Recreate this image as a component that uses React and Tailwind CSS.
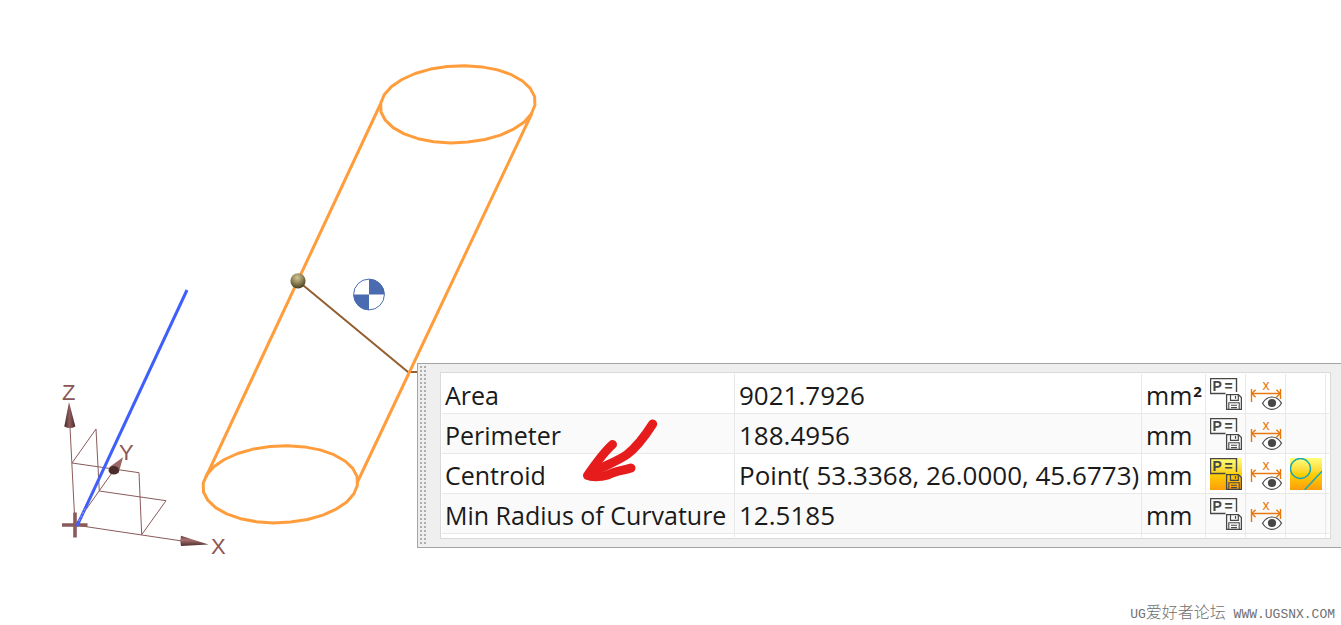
const MEASUREMENTS = [
  { id: 'area', label: 'Area', value: '9021.7926', unit: 'mm', power: '2' },
  { id: 'perimeter', label: 'Perimeter', value: '188.4956', unit: 'mm' },
  {
    id: 'centroid',
    label: 'Centroid',
    value: 'Point( 53.3368, 26.0000, 45.6773)',
    unit: 'mm',
    saved: true,
    hasGeometry: true
  },
  { id: 'min-radius', label: 'Min Radius of Curvature', value: '12.5185', unit: 'mm' }
];

const ACTIVE_BG = 'bg-linear-to-b from-[#ffff78] via-[#fbd000] to-[#ff9c0c]';

// Curves are tessellated, so the rims are drawn as polygons
const rimPoints = (cx, cy, segments = 28) => {
  const rx = 77.5;
  const ry = 38.5;
  const tilt = (-2.5 * Math.PI) / 180;

  return Array.from({ length: segments }, (_, i) => {
    const t = ((i + 0.5) / segments) * 2 * Math.PI;
    const x = rx * Math.cos(t);
    const y = ry * Math.sin(t);
    const px = cx + x * Math.cos(tilt) - y * Math.sin(tilt);
    const py = cy + x * Math.sin(tilt) + y * Math.cos(tilt);
    return `${px.toFixed(1)},${py.toFixed(1)}`;
  }).join(' ');
};

const SaveExpressionIcon = () => (
  <svg viewBox="0 0 32 32" className="block size-8" fill="none" stroke="#474747" aria-hidden="true">
    <path d="M15.5 15.5H0.5V0.5H26.5V14" strokeWidth="1.4" />
    <g
      fill="#474747"
      stroke="none"
      fontFamily="'Liberation Sans', sans-serif"
      fontWeight="700"
      fontSize="14"
    >
      <text x="2.4" y="13">P</text>
      <text x="14.4" y="13">=</text>
    </g>
    <path d="M16.6 16.6H28.4L31.4 19.6V31.4H16.6Z" strokeWidth="1.3" />
    <path d="M20.5 16.6V22.3H28.3V16.6M25.5 18V20.8" strokeWidth="1.2" />
    <path d="M18.8 31.4V24.7H29.2V31.4M21 27.2H27M21 29.6H27" strokeWidth="1.1" />
  </svg>
);

const ShowDimensionIcon = () => (
  <svg viewBox="0 0 32 32" className="block size-8" fill="none" aria-hidden="true">
    <g stroke="#e8780c" strokeWidth="1.4">
      <path d="M1.5 11V24M30.5 11V21M2 15.5H30" />
      <path d="M5.6 11.7L1.8 15.5L5.6 19.3M26.4 11.7L30.2 15.5L26.4 19.3" />
    </g>
    <text
      x="12.4"
      y="12"
      fill="#e8780c"
      fontFamily="'Liberation Sans', sans-serif"
      fontSize="14"
    >
      x
    </text>
    <path
      d="M12.5 25.2C15 21.2 18.4 19 22 19S29 21.2 31.5 25.2C29 29.2 25.6 31.4 22 31.4S15 29.2 12.5 25.2Z"
      fill="#fff"
      stroke="#474747"
      strokeWidth="1.2"
    />
    <circle cx="22" cy="25" r="4.1" fill="#474747" />
  </svg>
);

const GeometryIcon = () => (
  <svg
    viewBox="0 0 32 32"
    className="block size-8"
    fill="none"
    stroke="#14a8b8"
    strokeWidth="1.4"
    aria-hidden="true"
  >
    <circle cx="10.5" cy="10.5" r="10" />
    <path d="M14.5 32L32 13.2" />
  </svg>
);

const IconCell = ({ children }) => (
  <td className="border-r border-b border-[#e8e8e8] p-0">
    <div className="flex justify-center">{children}</div>
  </td>
);

const MeasurementRow = ({ item }) => (
  <tr className="h-10 even:bg-[#fafafa]">
    <th
      scope="row"
      className="border-r border-b border-[#e8e8e8] pt-[2px] pr-0 pb-0 pl-[3px] text-left text-[25px] font-normal"
    >
      {item.label}
    </th>
    <td className="border-r border-b border-[#e8e8e8] pt-[2px] pr-0 pb-0 pl-1">{item.value}</td>
    <td className="border-r border-b border-[#e8e8e8] pt-[2px] pr-0 pb-0 pl-1 text-[25px]">
      {item.unit}
      {item.power && <sup className="ml-px text-[15px] font-bold">{item.power}</sup>}
    </td>
    <IconCell>
      <button
        type="button"
        aria-label={`Save ${item.label} as expression`}
        aria-pressed={Boolean(item.saved)}
        className={item.saved ? ACTIVE_BG : ''}
      >
        <SaveExpressionIcon />
      </button>
    </IconCell>
    <IconCell>
      <button type="button" aria-label={`Show ${item.label} dimension`}>
        <ShowDimensionIcon />
      </button>
    </IconCell>
    <IconCell>
      {item.hasGeometry && (
        <button
          type="button"
          aria-label={`Create ${item.label} geometry`}
          aria-pressed="true"
          className={ACTIVE_BG}
        >
          <GeometryIcon />
        </button>
      )}
    </IconCell>
    <td className="border-b border-[#e8e8e8] p-0" />
  </tr>
);

const MeasurementPanel = () => (
  <section
    aria-label="Measurements"
    className="relative flex border-y border-l border-[#a3a3a3] bg-[#efefef] pr-[10px]"
  >
    <div className="my-[2px] ml-[2px] w-[7px] bg-[conic-gradient(from_270deg_at_2px_2px,#adadad_90deg,transparent_90deg)] bg-size-[4px_4px]" />
    <div className="my-2 ml-[13px] flex-1 border border-[#d9d9d9] bg-white p-px">
      <table className="w-full table-fixed border-separate border-spacing-0 font-['Open_Sans','Noto_Sans',sans-serif] text-[26px] leading-8 whitespace-nowrap text-[#1a1a1a]">
        <colgroup>
          <col className="w-[293px]" />
          <col />
          <col className="w-16" />
          <col className="w-10" />
          <col className="w-10" />
          <col className="w-10" />
          <col className="w-[3px]" />
        </colgroup>
        <tbody>
          {MEASUREMENTS.map((item) => (
            <MeasurementRow key={item.id} item={item} />
          ))}
          <tr className="h-[3px]" aria-hidden="true">
            {[0, 1, 2, 3, 4, 5].map((column) => (
              <td key={column} className="border-r border-[#e8e8e8] p-0" />
            ))}
            <td className="p-0" />
          </tr>
        </tbody>
      </table>
    </div>
  </section>
);

const ModelView = () => (
  <svg
    width="560"
    height="570"
    viewBox="0 0 560 570"
    className="absolute top-0 left-0"
    fill="none"
    role="img"
    aria-label="Cylinder with its centroid and the coordinate system"
  >
    <defs>
      <radialGradient id="ball" cx="0.45" cy="0.3" r="0.7">
        <stop offset="0" stopColor="#cfc596" />
        <stop offset="0.5" stopColor="#93875a" />
        <stop offset="1" stopColor="#48401f" />
      </radialGradient>
      <linearGradient id="coneZ">
        <stop offset="0" stopColor="#3f2626" />
        <stop offset="0.45" stopColor="#8f5c5c" />
        <stop offset="1" stopColor="#4a2c2c" />
      </linearGradient>
      <linearGradient id="coneX" x1="0" y1="0" x2="0" y2="1">
        <stop offset="0" stopColor="#6a4040" />
        <stop offset="0.4" stopColor="#a87070" />
        <stop offset="1" stopColor="#4a2c2c" />
      </linearGradient>
    </defs>

    {/* datum planes and axes */}
    <g stroke="#8b5a5a" strokeWidth="1">
      <path d="M75 525L70 427M75 525L182 541M75 525L114 470" />
      <path d="M72 463L139 472.7L141.7 534.7L166 500.7L99.3 491L96 429Z" />
    </g>
    <path d="M62 525H87.5M75 512.5V537.5" stroke="#8b5a5a" strokeWidth="3.6" />
    <path d="M77 526L187 290" stroke="#3f5ffb" strokeWidth="3" />
    <path d="M79 521L86 507" stroke="#b9a7cf" strokeWidth="1" strokeDasharray="2 2" />
    <path d="M69 402L64.3 426.5Q70 429.5 75.4 426.5Z" fill="url(#coneZ)" />
    <path d="M181 535.8L208.5 544.5L181 546Q179.5 541 181 535.8Z" fill="url(#coneX)" />
    <path d="M123 457.3L109.5 467L118.5 473.5Z" fill="#9a6666" />
    <ellipse cx="113.8" cy="470.3" rx="5.2" ry="4.3" fill="#4a2c2c" />
    <g fill="#8b5555" fontFamily="'Liberation Sans', sans-serif" fontSize="22">
      <text x="62" y="400">Z</text>
      <text x="119" y="460">Y</text>
      <text x="211" y="554">X</text>
    </g>

    {/* leader to the measurement panel */}
    <path d="M298 281L408 372H420" stroke="#935f30" strokeWidth="2" />

    <g stroke="#ff9d3c" strokeWidth="3" strokeLinejoin="round">
      <polygon points={rimPoints(457.8, 104.3)} />
      <polygon points={rimPoints(280.3, 484.3)} />
      <path d="M380.5 104L206 477M532 113L357 483" />
    </g>

    <circle cx="298" cy="280.8" r="7.6" fill="url(#ball)" />

    <circle cx="369" cy="294.5" r="15.4" fill="#fff" stroke="#4a6bb0" strokeWidth="1" />
    <path
      d="M369 294.5V279A15.5 15.5 0 0 1 384.5 294.5ZM369 294.5V310A15.5 15.5 0 0 1 353.5 294.5Z"
      fill="#4a6bb0"
    />
  </svg>
);

const CentroidArrow = () => (
  <svg
    width="100"
    height="80"
    viewBox="0 0 100 80"
    className="pointer-events-none absolute top-[410px] left-[570px]"
    fill="none"
    stroke="#e61c1c"
    strokeWidth="9"
    strokeLinecap="round"
    strokeLinejoin="round"
    aria-hidden="true"
  >
    <path d="M82.7 14C75 26 67 37 57 44.5C48 51 36 55 27 60" />
    <path d="M42.5 34.5C33 43 24 56 17.5 65.5C22 67.5 34 67 40 64C46 61 54 60.5 61 58" />
  </svg>
);

const App = () => (
  <main className="relative flex min-h-screen flex-col overflow-hidden bg-white">
    <ModelView />
    <div className="pt-[363px] pl-[417px]">
      <MeasurementPanel />
    </div>
    <CentroidArrow />
    <footer className="mt-auto flex items-center justify-end pr-[6px] font-['Liberation_Mono','Noto_Sans_CJK_SC',monospace] text-[13px] leading-5 text-[#707070]">
      <p className="whitespace-pre">
        UG<span className="text-base leading-5 font-light">爱好者论坛</span> WWW.UGSNX.COM
      </p>
    </footer>
  </main>
);

export default App;
